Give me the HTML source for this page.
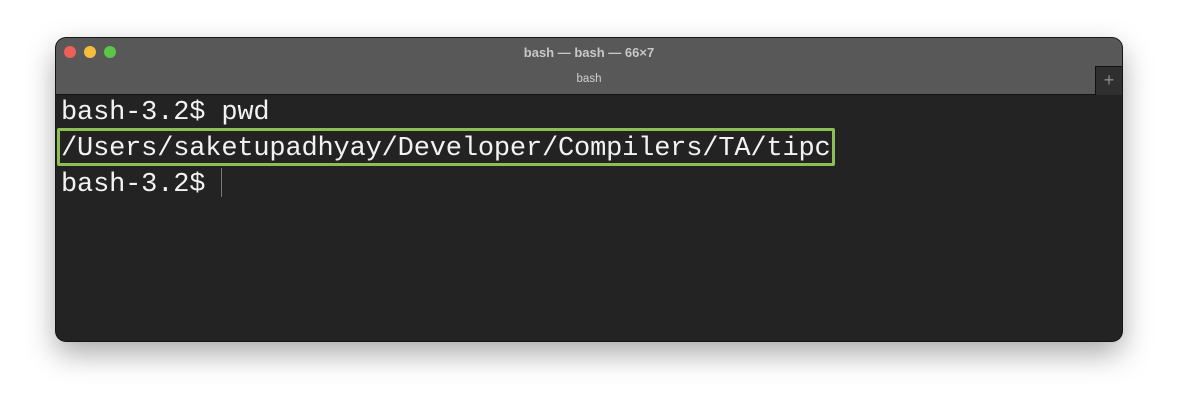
<!DOCTYPE html>
<html><head><style>
body{margin:0;width:1178px;height:416px;background:#fff;position:relative;overflow:hidden;font-family:"Liberation Sans",sans-serif}
.win{position:absolute;left:56px;top:38px;width:1066px;height:303px;background:#232323;border-radius:10px;box-shadow:0 12px 30px rgba(0,0,0,.35),0 0 0 1px #1a1a1a;overflow:hidden}
.title{position:absolute;left:0;top:0;width:100%;height:56px;background:#575857;border-bottom:1px solid #111}
.dot{position:absolute;top:8px;width:12px;height:12px;border-radius:50%}
.tt{position:absolute;top:7px;width:100%;text-align:center;color:#c8c8c8;font-size:13px;font-weight:bold}
.tab{position:absolute;top:35px;width:100%;text-align:center;color:#d0d0d0;font-size:11.5px}
.plus{position:absolute;right:0;top:28px;width:26px;height:28px;background:#2e2f2e;border-left:1px solid #111;border-top:1px solid #111;color:#8a8a8a;font-size:18px;text-align:center;line-height:26px}
.term{position:absolute;left:5px;top:57px;font-family:"Liberation Mono",monospace;font-size:27px;letter-spacing:-0.17px;line-height:36px;color:#f2f2f2;white-space:pre}
.box{position:absolute;left:1px;top:90px;width:772px;height:32px;border:3px solid #8dbf55;border-radius:2px}
.cur{position:absolute;left:165px;top:130px;width:1px;height:29px;background:#777}
</style></head><body>
<div class="win">
<div class="title">
<div class="dot" style="left:8px;background:#ed5f57"></div>
<div class="dot" style="left:28px;background:#f5bd3c"></div>
<div class="dot" style="left:48px;background:#5dc647"></div>
<div class="tt">bash — bash — 66×7</div>
<div class="tab">bash</div>
<div class="plus">+</div>
</div>
<div class="box"></div>
<div class="cur"></div>
<div class="term">bash-3.2$ pwd
/Users/saketupadhyay/Developer/Compilers/TA/tipc
bash-3.2$ </div>
</div>
</body></html>
